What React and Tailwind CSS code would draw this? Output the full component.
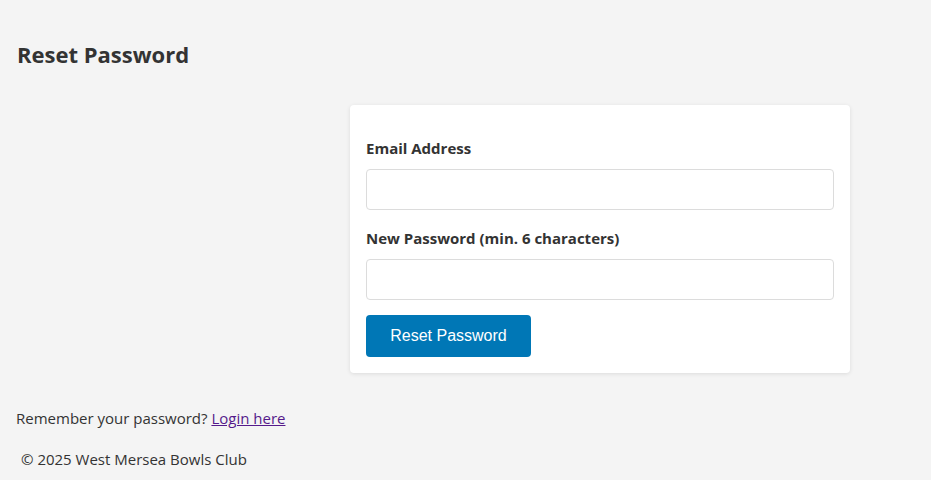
export default function App() {
  return (
    <div className="min-h-[480px] bg-[#f4f4f4] text-[#333] font-['Segoe_UI','Open_Sans',sans-serif] text-[15px]">
      <div className="px-4 pt-[38px]">
        <h1 className="pl-px text-[22px] font-bold leading-[32px] text-[#333]">Reset Password</h1>
        <div className="mt-[35px] flex">
          <div className="ml-[334px] w-[500px] rounded bg-white px-4 pt-[34px] pb-4 shadow-[0_1px_4px_rgba(0,0,0,0.1)]">
            <label className="block text-[15px] font-bold leading-[18px]">Email Address</label>
            <input type="email" className="mt-[12px] block h-[41px] w-full rounded border border-[#dcdcdc] bg-white px-2" />
            <label className="mt-[19px] block text-[15px] font-bold leading-[18px]">New Password (min. 6 characters)</label>
            <input type="password" className="mt-[12px] block h-[41px] w-full rounded border border-[#dcdcdc] bg-white px-2" />
            <button className="mt-[15px] block h-[42px] w-[165px] rounded bg-[#0077b6] font-['Liberation_Sans',Arial,sans-serif] text-[16px] text-white">Reset Password</button>
          </div>
        </div>
        <p className="mt-[35px] leading-[20px]">
          Remember your password? <a href="#" className="text-[#551a8b] underline">Login here</a>
        </p>
        <p className="mt-[21px] pl-[5px] leading-[20px]">© 2025 West Mersea Bowls Club</p>
      </div>
    </div>
  );
}
